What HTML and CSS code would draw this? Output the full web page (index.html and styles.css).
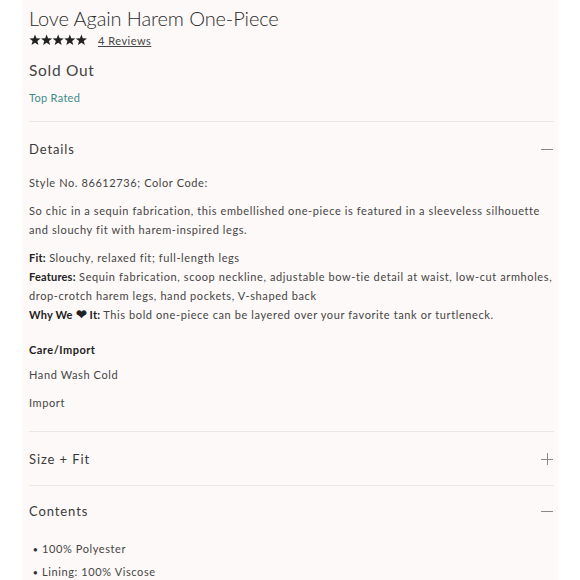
FILE: index.html
```html
<!DOCTYPE html>
<html lang="en">
<head>
<meta charset="utf-8">
<title>Love Again Harem One-Piece</title>
<link rel="stylesheet" href="styles.css">
</head>
<body>
<main class="panel">
  <h1 class="title">Love Again Harem One-Piece</h1>
  <div class="rating">
    <span class="stars" aria-label="5 stars">
      <svg viewBox="0 0 58 12" width="58" height="12">
        <defs>
          <path id="star" d="M6 0.4 L7.45 4.3 L11.6 4.45 L8.35 7 L9.5 11.1 L6 8.7 L2.5 11.1 L3.65 7 L0.4 4.45 L4.55 4.3 Z"/>
        </defs>
        <use href="#star" x="0"/>
        <use href="#star" x="11.6"/>
        <use href="#star" x="23.2"/>
        <use href="#star" x="34.8"/>
        <use href="#star" x="46.4"/>
      </svg>
    </span>
    <a class="reviews" href="#">4 Reviews</a>
  </div>
  <p class="status">Sold Out</p>
  <p class="badge">Top Rated</p>

  <section class="acc">
    <div class="acc-head">
      <span>Details</span>
      <span class="icon minus"></span>
    </div>
    <div class="acc-body">
      <p class="style-no">Style No. 86612736; Color Code:</p>
      <p class="desc">So chic in a sequin fabrication, this embellished one-piece is featured in a sleeveless silhouette and slouchy fit with harem-inspired legs.</p>
      <p class="specs"><b>Fit:</b> Slouchy, relaxed fit; full-length legs<br><b>Features:</b> Sequin fabrication, scoop neckline, adjustable bow-tie detail at waist, low-cut armholes, drop-crotch harem legs, hand pockets, V-shaped back<br><b>Why We <span class="heart">&#10084;</span> It:</b> This bold one-piece can be layered over your favorite tank or turtleneck.</p>
      <h3 class="care-title">Care/Import</h3>
      <p class="care">Hand Wash Cold</p>
      <p class="care">Import</p>
    </div>
  </section>

  <section class="acc">
    <div class="acc-head">
      <span>Size + Fit</span>
      <span class="icon plus"></span>
    </div>
  </section>

  <section class="acc acc-last">
    <div class="acc-head acc-head-tight">
      <span>Contents</span>
      <span class="icon minus"></span>
    </div>
    <ul class="contents">
      <li>100% Polyester</li>
      <li>Lining: 100% Viscose</li>
    </ul>
  </section>
</main>
</body>
</html>
```
FILE: styles.css
```css
* { box-sizing: border-box; }
html, body { margin: 0; padding: 0; background: #ffffff; }
body {
  font-family: "Lato", "Liberation Sans", sans-serif;
  color: #333;
  height: 580px;
  overflow: hidden;
}
.panel {
  margin-left: 22px;
  width: 536px;
  min-height: 580px;
  background: #fdf9f8;
  padding: 6px 4px 0 7px;
}
p, h1, h3, ul { margin: 0; }
.title {
  font-family: "Lato", sans-serif;
  font-weight: 300;
  font-size: 20px;
  line-height: 24px;
  color: #2c2c2c;
  letter-spacing: -0.1px;
}
.rating {
  display: flex;
  align-items: center;
  gap: 11px;
  height: 20px;
  margin-top: 0;
}
.stars svg { display: block; fill: #222; }
.reviews {
  font-size: 11px;
  color: #444;
  text-decoration: underline;
  letter-spacing: 0.5px;
}
.status {
  font-size: 15.5px;
  line-height: 20px;
  margin-top: 10px;
  letter-spacing: 0.7px;
  color: #444;
  font-weight: 400;
}
.badge {
  font-size: 11px;
  line-height: 16px;
  margin-top: 10px;
  color: #3e8b87;
  letter-spacing: 0.3px;
}
.acc { border-top: 1px solid #ece7e5; }
.badge + .acc { margin-top: 15px; }
.acc-head {
  display: flex;
  justify-content: space-between;
  align-items: center;
  font-size: 13px;
  line-height: 20px;
  letter-spacing: 0.9px;
  color: #3a3a3a;
  padding: 17px 1px 16px 0;
}
.acc-head-tight { padding-top: 15px; }
.icon { position: relative; width: 12px; height: 12px; display: inline-block; }
.icon::before, .icon::after {
  content: "";
  position: absolute;
  background: #888;
}
.icon::before { left: 0; right: 0; top: 5.5px; height: 1px; }
.plus::after { top: 0; bottom: 0; left: 5.5px; width: 1px; }
.minus::after { display: none; }
.acc-body {
  font-size: 11px;
  line-height: 19px;
  letter-spacing: 0.6px;
  color: #444;
  padding-bottom: 19px;
  margin-top: -2px;
}
.acc-body b { font-weight: 700; color: #222; letter-spacing: 0.2px; }
.style-no { margin-bottom: 9px; }
.desc { margin-bottom: 9px; }
.specs { margin-bottom: 16px; margin-right: -3px; }
.heart { font-size: 13px; line-height: 0; color: #222; }
.care-title {
  font-size: 11px;
  line-height: 19px;
  font-weight: 700;
  color: #222;
  letter-spacing: 0.5px;
  margin-bottom: 6px;
}
.care + .care { margin-top: 9px; }
.contents {
  padding-left: 13px;
  font-size: 11px;
  line-height: 18px;
  letter-spacing: 0.6px;
  color: #444;
  margin-top: 3px;
}
.contents li { margin-bottom: 5px; }
.contents li::marker { content: "\2022\2009\2009"; font-size: 9px; color: #333; }
```
